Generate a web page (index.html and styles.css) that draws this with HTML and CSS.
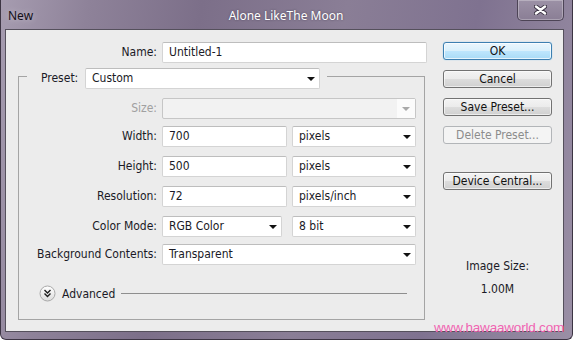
FILE: index.html
```html
<!DOCTYPE html>
<html lang="en">
<head>
  <meta charset="UTF-8">
  <title>New</title>
  <link rel="stylesheet" href="styles.css">
</head>
<body>
  <div class="window">
    <div class="titlebar">
      <span class="app-name">New</span>
      <span class="title">Alone LikeThe Moon</span>
      <div class="title-right">
        <button class="close-btn" aria-label="Close">
          <svg width="13" height="10" viewBox="0 0 13 10">
            <path d="M2 1.5 L11 8.5 M11 1.5 L2 8.5" stroke="#3a3242" stroke-width="4.2" stroke-linecap="round"/>
            <path d="M2 1.5 L11 8.5 M11 1.5 L2 8.5" stroke="#ffffff" stroke-width="2.4" stroke-linecap="round"/>
          </svg>
        </button>
      </div>
    </div>

    <div class="client">
      <div class="form">
        <div class="name-row">
          <label>Name:</label>
          <div class="input">Untitled-1</div>
        </div>

        <fieldset class="preset-group">
          <legend>
            <span class="legend-label">Preset:</span>
            <div class="select preset">Custom<span class="arrow"></span></div>
          </legend>

          <div class="field-row">
            <label class="disabled">Size:</label>
            <div class="select wide is-disabled"><span class="arrow-box"><span class="arrow"></span></span></div>
          </div>
          <div class="field-row tight">
            <label>Width:</label>
            <div class="input">700</div>
            <div class="select">pixels<span class="arrow"></span></div>
          </div>
          <div class="field-row">
            <label>Height:</label>
            <div class="input">500</div>
            <div class="select">pixels<span class="arrow"></span></div>
          </div>
          <div class="field-row">
            <label>Resolution:</label>
            <div class="input">72</div>
            <div class="select">pixels/inch<span class="arrow"></span></div>
          </div>
          <div class="field-row">
            <label>Color Mode:</label>
            <div class="select short">RGB Color<span class="arrow"></span></div>
            <div class="select">8 bit<span class="arrow"></span></div>
          </div>
          <div class="field-row tight">
            <label>Background Contents:</label>
            <div class="select wide">Transparent<span class="arrow"></span></div>
          </div>

          <div class="advanced">
            <svg class="adv-icon" width="17" height="17" viewBox="0 0 17 17">
              <defs>
                <linearGradient id="advBg" x1="0" y1="0" x2="0" y2="1">
                  <stop offset="0" stop-color="#ffffff"/>
                  <stop offset="1" stop-color="#dcdcdc"/>
                </linearGradient>
              </defs>
              <circle cx="8.5" cy="8.5" r="7.5" fill="url(#advBg)" stroke="#a9a9a9"/>
              <path d="M5.5 5 L8.5 8 L11.5 5 M5.5 8.5 L8.5 11.5 L11.5 8.5" fill="none" stroke="#1c1c1c" stroke-width="1.4"/>
            </svg>
            <span class="adv-text">Advanced</span>
            <span class="adv-line"></span>
          </div>
        </fieldset>
      </div>

      <div class="actions">
        <button class="btn default">OK</button>
        <button class="btn">Cancel</button>
        <button class="btn">Save Preset...</button>
        <button class="btn" disabled>Delete Preset...</button>
        <button class="btn device">Device Central...</button>
        <div class="image-size">
          <p>Image Size:</p>
          <p class="size-value">1.00M</p>
        </div>
      </div>
    </div>

    <div class="watermark">www.hawaaworld.com</div>
  </div>
</body>
</html>
```

FILE: styles.css
```css
* {
  box-sizing: border-box;
}
body {
  margin: 0;
  background: #fff;
  font-family: 'DejaVu Sans Condensed', 'DejaVu Sans', sans-serif;
  font-stretch: condensed;
  font-size: 12px;
  color: #1a1a26;
}

.window {
  position: relative;
  width: 573px;
  height: 340px;
  border: 1px solid #3d3544;
  border-top: none;
  border-radius: 0 0 6px 6px;
  background: linear-gradient(100deg, #a69cb0 0%, #8e8299 14%, #7c6f89 32%, #8a7e96 55%, #7f7290 76%, #9a8fa5 100%);
}

/* title bar */
.titlebar {
  height: 29px;
  display: grid;
  grid-template-columns: 1fr auto 1fr;
  align-items: start;
  padding: 0 8px 0 7px;
}
.app-name {
  font-family: 'Noto Sans', sans-serif;
  font-stretch: normal;
  font-size: 12px;
  color: #141018;
  line-height: 31px;
  text-shadow: 0 0 6px rgba(255, 255, 255, 0.45);
}
.title {
  font-family: 'Noto Sans', sans-serif;
  font-stretch: normal;
  font-size: 12px;
  color: #fff;
  line-height: 31px;
  text-shadow: 0 0 2px rgba(50, 40, 60, 0.7);
}
.title-right {
  display: flex;
  justify-content: flex-end;
}
.close-btn {
  width: 47px;
  height: 21px;
  padding: 0;
  display: flex;
  align-items: center;
  justify-content: center;
  border: 1px solid #4d4456;
  border-top: none;
  border-radius: 0 0 5px 5px;
  background: linear-gradient(#9c91a6, #8a7e95);
  box-shadow: inset 0 0 0 1px rgba(255, 255, 255, 0.28);
}

/* client area */
.client {
  margin: 0 8px 0 4px;
  height: 303px;
  border: 1px solid #55505c;
  background: #ececec;
  display: grid;
  grid-template-columns: 421px 109px;
  column-gap: 16px;
  align-items: start;
}

.name-row {
  margin-top: 12px;
  display: grid;
  grid-template-columns: 151px 265px;
  column-gap: 5px;
}
label {
  text-align: right;
  line-height: 21px;
  white-space: nowrap;
}
label.disabled {
  color: #a0a0a0;
}

.input,
.select {
  height: 21px;
  line-height: 19px;
  padding: 0 6px;
  background: #fff;
  border: 1px solid #d4d4d4;
  border-top-color: #bdbdbd;
  border-radius: 2px;
  white-space: nowrap;
}
.select {
  display: flex;
  justify-content: space-between;
  align-items: center;
  padding-right: 4px;
}
.arrow {
  width: 0;
  height: 0;
  border-left: 4px solid transparent;
  border-right: 4px solid transparent;
  border-top: 4px solid #111;
}
.select.is-disabled {
  background: #f2f2f2;
  border-color: #c6c6c6;
  padding-right: 0;
  justify-content: flex-end;
}
.arrow-box {
  height: 19px;
  width: 18px;
  background: #fbfbfb;
  display: flex;
  align-items: center;
  justify-content: center;
}
.is-disabled .arrow {
  border-top-color: #a8a8a8;
}

/* preset group */
.preset-group {
  margin: 5px 0 0 12px;
  width: 407px;
  padding: 14px 0 17px 0;
  border: 1px solid #a4a4a4;
  min-inline-size: 0;
}
.preset-group legend {
  display: flex;
  align-items: flex-start;
  height: 16px;
  margin-left: 8px;
  padding: 0 7px 0 14px;
}
.legend-label {
  width: 44px;
  line-height: 21px;
}
.select.preset {
  width: 235px;
}

.field-row {
  display: grid;
  grid-template-columns: 138px 125px 124px;
  column-gap: 5px;
  margin-top: 9px;
}
.field-row.tight {
  margin-top: 7px;
}
.preset-group legend + .field-row {
  margin-top: 0;
}
.select.wide {
  grid-column: 2 / 4;
}
.select.short {
  width: 120px;
}

.advanced {
  display: flex;
  align-items: center;
  height: 17px;
  margin: 20px 17px 0 20px;
}
.adv-text {
  margin-left: 6px;
}
.adv-line {
  flex: 1;
  height: 1px;
  margin-left: 6px;
  background: #8e8e8e;
}

/* buttons column */
.actions {
  display: flex;
  flex-direction: column;
  padding-top: 12px;
}
.btn {
  height: 18px;
  padding: 0;
  margin-bottom: 10px;
  font: inherit;
  font-stretch: condensed;
  color: #111;
  border: 1px solid #727272;
  border-radius: 3px;
  background: linear-gradient(#f3f3f3 0%, #ebebeb 50%, #dddddd 51%, #d0d0d0 100%);
  box-shadow: inset 0 0 0 1px rgba(255, 255, 255, 0.6);
}
.btn.default {
  border-color: #3c7fb1;
  background: linear-gradient(#eaf6fd 0%, #d9f0fc 50%, #bee6fd 51%, #a9dbf6 100%);
  box-shadow: inset 0 0 0 1px rgba(255, 255, 255, 0.7), 0 0 1px #5fb8ee;
}
.btn:disabled {
  color: #8c8c8c;
  border-color: #b2b5b8;
  background: #f4f4f4;
  box-shadow: none;
}
.btn.device {
  margin-top: 18px;
}
.image-size {
  margin-top: 59px;
  text-align: center;
}
.image-size p {
  margin: 0;
  line-height: 14px;
}
.image-size .size-value {
  margin-top: 9px;
}

.watermark {
  position: absolute;
  right: 8px;
  bottom: 4px;
  font-family: 'Liberation Sans', Arial, sans-serif;
  font-size: 13.5px;
  letter-spacing: -0.2px;
  color: #f064b2;
}
```
